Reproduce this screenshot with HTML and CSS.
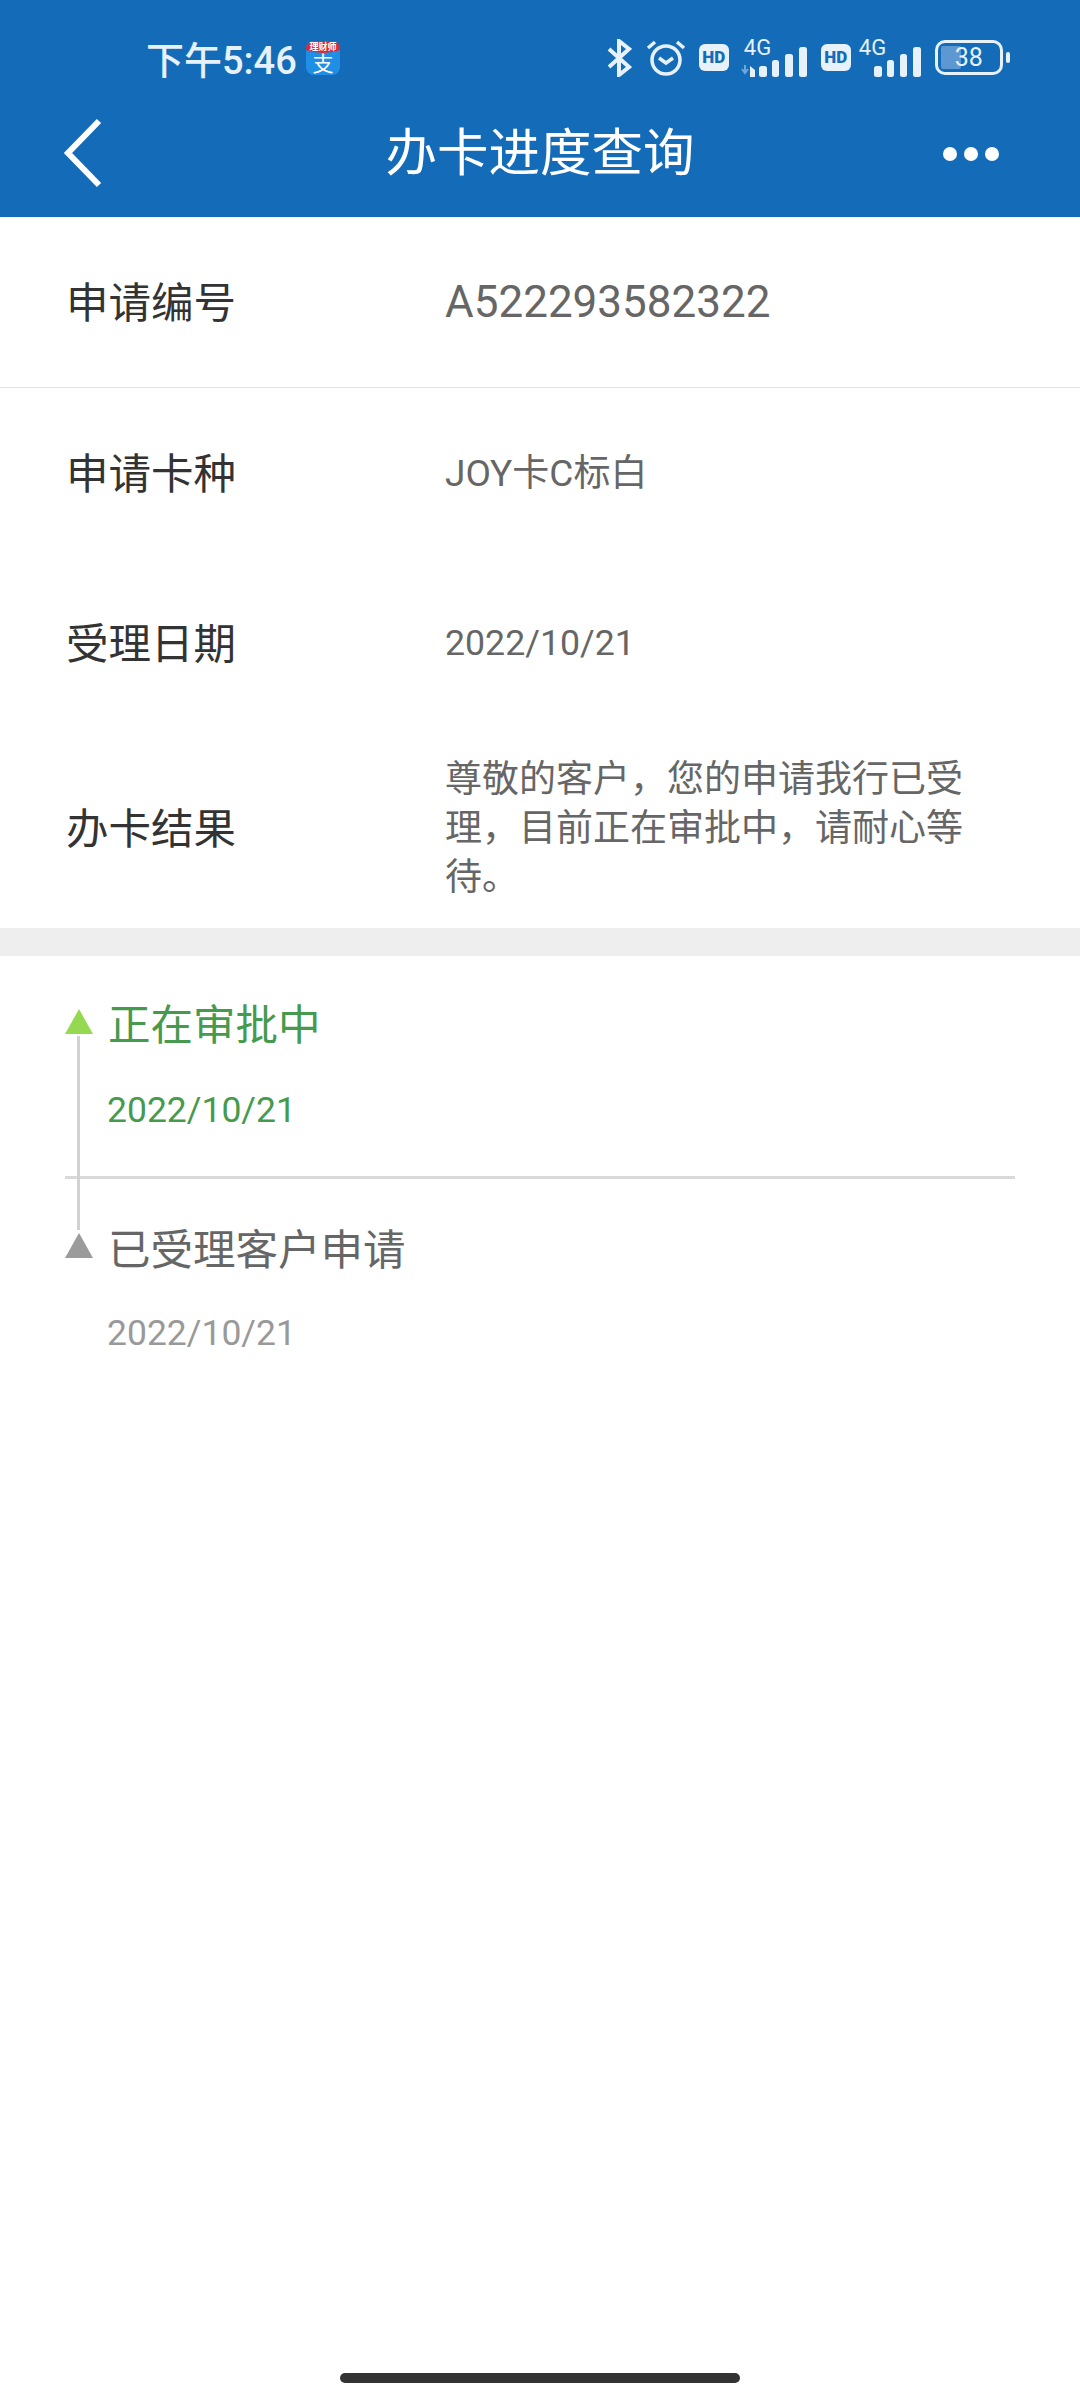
FILE: index.html
```html
<!DOCTYPE html>
<html>
<head>
    <meta charset="utf-8">
    <meta name="viewport" content="width=device-width, initial-scale=1">
    <title>办卡进度查询</title>
    <link rel="stylesheet" href="styles.css">
</head>
<body>

    <div class="header">
        <!-- Status bar -->
        <div class="status-bar">
            <span class="clock">下午5:46</span>
            <svg class="app-icon" width="36" height="36" viewBox="0 0 36 36">
                <rect x="1" y="1" width="34" height="34" rx="8" fill="#1f8fe6"/>
                <path d="M1 10V9a8 8 0 0 1 8-8h18a8 8 0 0 1 8 8v1q-17 6-34 0z" fill="#d92b35"/>
                <text x="18" y="10" class="app-band">理财师</text>
                <text x="18" y="31" class="app-glyph">支</text>
            </svg>
            <div class="status-icons">
                <svg width="25" height="38" viewBox="0 0 25 38">
                    <path d="M2 10l20 18-10 8V2l10 8L2 28" fill="none" stroke="#e6f1fa" stroke-width="4"/>
                </svg>
                <svg class="alarm" width="40" height="38" viewBox="0 0 40 38">
                    <circle cx="20" cy="21" r="14" fill="none" stroke="#e6f1fa" stroke-width="3.5"/>
                    <path d="M13 19l7 5 7-5" fill="none" stroke="#e6f1fa" stroke-width="3.5"/>
                    <path d="M2 9l7-6M38 9l-7-6" fill="none" stroke="#e6f1fa" stroke-width="3.5"/>
                </svg>
                <span class="hd hd-first">HD</span>
                <div class="signal signal-first">
                    <span class="net">4G</span>
                    <svg width="69" height="30" viewBox="0 0 69 30">
                        <path d="M1 22l3 4 3-4M4 26v-8" fill="none" stroke="#6fa6db" stroke-width="2"/>
                        <path d="M9 30V19l5 4v7z" fill="#e6f1fa"/>
                        <rect x="18" y="19" width="8" height="11" rx="2.5" fill="#e6f1fa"/>
                        <rect x="31" y="13" width="7" height="17" rx="2.5" fill="#e6f1fa"/>
                        <rect x="44" y="7" width="8" height="23" rx="2.5" fill="#e6f1fa"/>
                        <rect x="58" y="0" width="8" height="30" rx="2.5" fill="#e6f1fa"/>
                    </svg>
                </div>
                <span class="hd hd-second">HD</span>
                <div class="signal signal-second">
                    <span class="net">4G</span>
                    <svg width="48" height="30" viewBox="0 0 48 30">
                        <rect x="0" y="19" width="8" height="11" rx="2.5" fill="#e6f1fa"/>
                        <rect x="13" y="13" width="7" height="17" rx="2.5" fill="#e6f1fa"/>
                        <rect x="26" y="7" width="7" height="23" rx="2.5" fill="#e6f1fa"/>
                        <rect x="39" y="0" width="8" height="30" rx="2.5" fill="#e6f1fa"/>
                    </svg>
                </div>
                <div class="battery">
                    <div class="battery-level"></div>
                    <span class="battery-num">38</span>
                </div>
                <div class="battery-cap"></div>
            </div>
        </div>
        <!-- Title bar -->
        <div class="nav-bar">
            <svg class="back" width="42" height="70" viewBox="0 0 42 70">
                <path d="M36 3L5 35l31 32" fill="none" stroke="#fff" stroke-width="6"/>
            </svg>
            <div class="nav-title">办卡进度查询</div>
            <div class="more"><i></i><i></i><i></i></div>
        </div>
    </div>

    <!-- Application info -->
    <div class="info">
        <div class="row row-first">
            <div class="label">申请编号</div>
            <div class="value value-large">A522293582322</div>
        </div>
        <div class="row">
            <div class="label">申请卡种</div>
            <div class="value">JOY卡C标白</div>
        </div>
        <div class="row">
            <div class="label">受理日期</div>
            <div class="value value-date">2022/10/21</div>
        </div>
        <div class="row row-result">
            <div class="label">办卡结果</div>
            <div class="value">尊敬的客户，您的申请我行已受理，目前正在审批中，请耐心等待。</div>
        </div>
    </div>

    <div class="band"></div>

    <!-- Progress timeline -->
    <div class="timeline">
        <div class="step step-active">
            <div class="marker"></div>
            <div class="step-title">正在审批中</div>
            <div class="step-date">2022/10/21</div>
        </div>
        <div class="step step-done">
            <div class="marker"></div>
            <div class="step-title">已受理客户申请</div>
            <div class="step-date">2022/10/21</div>
        </div>
    </div>

    <div class="spacer"></div>
    <div class="home-bar"></div>

</body>
</html>
```

FILE: styles.css
```css
body {
    margin: 0;
    padding: 0;
    background-color: #fff;
    font-family: "Roboto", "Noto Sans CJK SC", sans-serif;
    display: flex;
    flex-direction: column;
    height: 2400px;
    overflow: hidden;
}

/* Header */
.header {
    background-color: #146cb9;
    height: 217px;
    flex: none;
}
.status-bar {
    height: 80px;
    padding: 35px 0 0 146px;
    box-sizing: border-box;
    display: flex;
    align-items: center;
    color: #e6f1fa;
}
.clock {
    font-size: 38px;
    font-weight: 500;
}
.app-icon {
    margin-left: 8px;
    overflow: visible;
}
.app-band {
    fill: #fff;
    font-size: 9px;
    font-weight: 700;
    text-anchor: middle;
}
.app-glyph {
    fill: #fff;
    font-size: 21px;
    text-anchor: middle;
}
.status-icons {
    display: flex;
    align-items: center;
    margin-left: 266px;
}
.alarm {
    margin-left: 14px;
}
.hd {
    width: 30px;
    height: 27px;
    border-radius: 6px;
    background-color: #e6f1fa;
    color: #146cb9;
    font-size: 17px;
    font-weight: 900;
    line-height: 27px;
    text-align: center;
}
.hd-first {
    margin-left: 13px;
}
.hd-second {
    margin-left: 11px;
}
.signal {
    position: relative;
    height: 38px;
    display: flex;
    align-items: flex-end;
}
.signal-first {
    margin-left: 12px;
}
.signal-second {
    margin-left: 23px;
}
.net {
    position: absolute;
    top: -1px;
    left: 3px;
    font-size: 22px;
    line-height: 20px;
}
.signal-second .net {
    left: -15px;
}
.battery {
    position: relative;
    width: 56px;
    height: 23px;
    margin-left: 13px;
    padding: 3px;
    border: 3px solid #e6f1fa;
    border-radius: 10px;
}
.battery-level {
    width: 20px;
    height: 100%;
    border-radius: 2px;
    background-color: #5d98d2;
}
.battery-num {
    position: absolute;
    top: 0;
    left: 0;
    right: 0;
    font-size: 25px;
    line-height: 29px;
    text-align: center;
}
.battery-cap {
    width: 4px;
    height: 11px;
    margin-left: 3px;
    border-radius: 2px;
    background-color: #e6f1fa;
}
.nav-bar {
    position: relative;
    height: 137px;
    display: flex;
    align-items: center;
    justify-content: center;
}
.back {
    position: absolute;
    left: 63px;
    top: 38px;
}
.nav-title {
    color: #fff;
    font-size: 51.5px;
}
.more {
    position: absolute;
    right: 81px;
    top: 67px;
    display: flex;
    gap: 7px;
}
.more i {
    width: 14px;
    height: 14px;
    border-radius: 50%;
    background-color: #fff;
}

/* Info rows */
.info {
    flex: none;
}
.row {
    display: flex;
    align-items: center;
    height: 170px;
    padding: 0 70px 0 66px;
}
.row-first {
    border-bottom: 1px solid #e3e3e3;
}
.row-result {
    height: 200px;
}
.label {
    width: 379px;
    flex: none;
    padding-bottom: 6px;
    color: #333;
    font-size: 42.5px;
}
.value {
    color: #666;
    font-size: 37px;
    line-height: 49px;
}
.value-large {
    font-size: 44px;
}
.value-date {
    font-size: 35.7px;
}
.band {
    flex: none;
    height: 28px;
    background-color: #eee;
}

/* Timeline */
.timeline {
    flex: none;
    margin: 0 65px;
}
.step {
    position: relative;
    box-sizing: border-box;
    padding: 42px 0 0 43px;
}
.step-active {
    height: 223px;
    border-bottom: 3px solid #d9d9d9;
}
.step-active::before {
    content: "";
    position: absolute;
    left: 12px;
    top: 80px;
    width: 3px;
    height: 194px;
    background-color: #d2d2d2;
    z-index: 1;
}
.step-done {
    padding-top: 44px;
}
.marker {
    position: absolute;
    left: 0;
    top: 54px;
    width: 0;
    height: 0;
    border-left: 14px solid transparent;
    border-right: 14px solid transparent;
    border-bottom: 25px solid #9b9b9b;
}
.step-active .marker {
    top: 53px;
    border-bottom-color: #94d94f;
}
.step-title {
    color: #666;
    font-size: 42.5px;
    line-height: 56px;
}
.step-date {
    margin-top: 28px;
    margin-left: -1px;
    color: #999;
    font-size: 35.5px;
    line-height: 56px;
}
.step-done .step-date {
    margin-top: 26px;
}
.step-active .step-title, .step-active .step-date {
    color: #459a4d;
}

.spacer {
    flex: 1;
}
.home-bar {
    flex: none;
    align-self: center;
    width: 400px;
    height: 10px;
    margin-bottom: 17px;
    border-radius: 5px;
    background-color: #333;
}
```
